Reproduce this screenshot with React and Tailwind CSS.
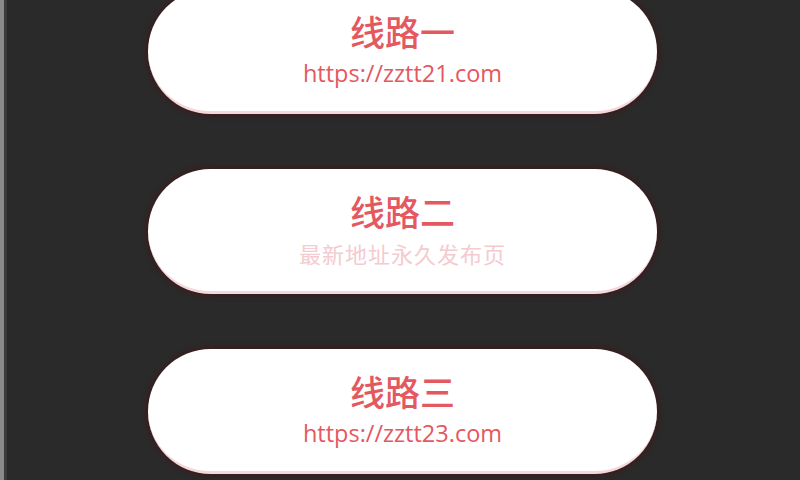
export default function App() {
  const lines = [
    { name: "线路一", url: "https://zztt21.com" },
    { name: "线路二", url: null },
    { name: "线路三", url: "https://zztt23.com" },
  ];
  return (
    <div className="flex h-[480px] w-[800px] overflow-hidden bg-[#2b2a2a]">
      <div className="h-full w-[4px] bg-[#8a8a8a]" />
      <div className="h-full w-[3px] bg-[#3c3b3b]" />
      <div className="mt-[-11px] flex flex-1 flex-col items-center gap-[55px] pr-[2px]">
        {lines.map((l) => (
          <div
            key={l.name}
            className="flex h-[125px] w-[509px] shrink-0 flex-col items-center rounded-full border-b-[3px] border-[#f6d7da] bg-white pt-[19px] shadow-[0_0_5px_2px_#3a1c1e]"
            style={{ fontFamily: '"Noto Sans CJK SC", "Open Sans", sans-serif' }}
          >
            <div className="text-[35px] leading-[46px] font-medium text-[#e4585f]">{l.name}</div>
            {l.url ? (
              <div
                className="mt-[3px] text-[23.5px] leading-[32px] font-medium text-[#e4585f]"
                style={{ fontFamily: '"Open Sans", sans-serif' }}
              >
                {l.url}
              </div>
            ) : (
              <div className="mt-[3px] text-[22px] leading-[32px] tracking-[1px] text-[#f3cbd0]">
                最新地址永久发布页
              </div>
            )}
          </div>
        ))}
      </div>
    </div>
  );
}
